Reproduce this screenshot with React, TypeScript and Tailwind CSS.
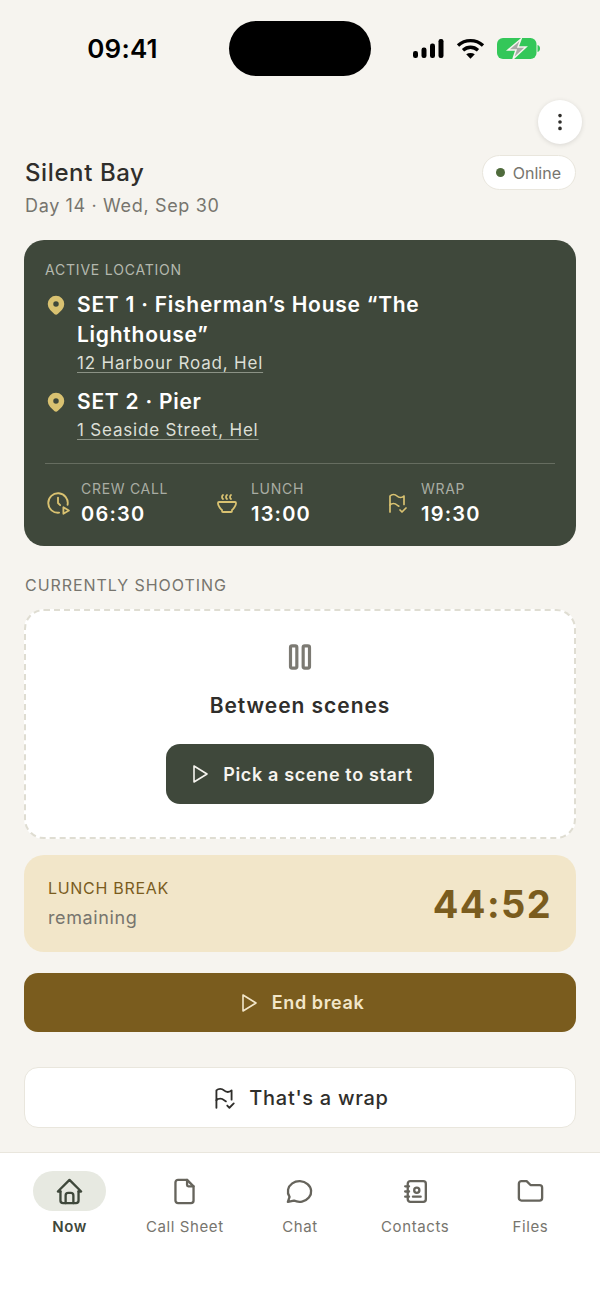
import {
  TbAddressBook,
  TbClockPlay,
  TbDotsVertical,
  TbFile,
  TbFlagCheck,
  TbFolder,
  TbHome,
  TbMapPinFilled,
  TbMessageCircle,
  TbPlayerPause,
  TbPlayerPlay,
  TbSoup,
} from "react-icons/tb";

function StatusIcons() {
  return (
    <div className="flex items-center gap-[12px]">
      <svg width="32" height="21" viewBox="0 0 32 21" fill="#000">
        <rect x="1" y="13" width="5" height="7" rx="2.2" />
        <rect x="9.500" y="9.500" width="5" height="10.500" rx="2.200" />
        <rect x="18" y="5.500" width="5" height="14.500" rx="2.200" />
        <rect x="26.500" y="1" width="5" height="19" rx="2.200" />
      </svg>
      <svg width="29" height="21" viewBox="0 0 29 21" fill="none" stroke="#000" strokeWidth="3.400">
        <path d="M2 7.500C9.200 1 19.800 1 27 7.500" />
        <path d="M7 12.200C11.500 8.300 17.500 8.300 22 12.200" />
        <path d="M14.500 20.800l-4.300-4.600c2.600-1.700 6-1.700 8.600 0z" fill="#000" stroke="none" />
      </svg>
      <svg width="43" height="21" viewBox="0 0 43 21">
        <rect x="0" y="0" width="39.500" height="21" rx="6" fill="#34c759" />
        <path d="M40.500 7c1.700.5 2.500 1.800 2.500 3.500s-.8 3-2.500 3.500z" fill="#34c759" />
        <path d="M24 1 11 12h8l-3 9L29 9h-8z" fill="#a8aaa6" stroke="#f6f4ef" strokeWidth="1.500" />
      </svg>
    </div>
  );
}

function LocationRow({ title, address }: { title: string; address: string }) {
  return (
    <div className="flex gap-[10px]">
      <TbMapPinFilled className="mt-[4px] shrink-0 text-[#d9c271]" size={22} />
      <div className="min-w-0 pr-[100px]">
        <div className="text-[21px] leading-[30px] font-semibold tracking-[0.75px] text-white">{title}</div>
        <div className="mt-[1px] text-[17px] leading-[24px] tracking-[0.8px] text-[#dcdfd6] underline decoration-[#8b9285] decoration-1 underline-offset-[3px]">
          {address}
        </div>
      </div>
    </div>
  );
}

function Stat({ icon, label, value, gap }: { icon: React.ReactNode; label: string; value: string; gap: string }) {
  return (
    <div className={`flex items-center ${gap}`}>
      <span className="text-[#d9c271]">{icon}</span>
      <div>
        <div className="text-[14px] leading-[18px] tracking-[0.7px] text-[#a9ada3]">{label}</div>
        <div className="mt-[4px] text-[20px] leading-[24px] font-semibold tracking-[1.2px] text-white">{value}</div>
      </div>
    </div>
  );
}

function NavItem({ icon, label, active }: { icon: React.ReactNode; label: string; active?: boolean }) {
  return (
    <div className="flex flex-col items-center">
      <div className={`flex h-[40px] w-[73px] items-center justify-center rounded-full ${active ? "bg-[#e7e9e1] text-[#3f483b]" : "text-[#66645c]"}`}>
        {icon}
      </div>
      <div className={`mt-[6px] text-[15px] leading-[20px] tracking-[0.6px] ${active ? "font-semibold text-[#3f483b]" : "text-[#77756e]"}`}>
        {label}
      </div>
    </div>
  );
}

export default function App() {
  return (
    <div className="flex h-[1304px] w-[600px] flex-col overflow-hidden bg-[#f6f4ef] font-['Inter',sans-serif]">
      <div className="flex h-[100px] shrink-0 items-start justify-between pt-[21px]">
        <div className="w-[229px] pt-[12px] pl-[16px] text-center text-[26px] leading-[32px] font-semibold tracking-[0.2px] text-black">
          09:41
        </div>
        <div className="h-[55px] w-[142px] rounded-[28px] bg-black" />
        <div className="flex w-[229px] justify-start pt-[17px] pl-[41px]">
          <StatusIcons />
        </div>
      </div>

      <div className="flex shrink-0 justify-end pr-[18px]">
        <div className="flex h-[44px] w-[44px] items-center justify-center rounded-full bg-white text-[#2f2e2b] shadow-[0_1px_5px_rgba(0,0,0,0.12)]">
          <TbDotsVertical size={22} />
        </div>
      </div>

      <div className="mt-[11px] flex shrink-0 items-start justify-between pr-[24px] pl-[25px]">
        <div className="pt-[2px]">
          <div className="text-[24px] leading-[32px] font-medium tracking-[0.6px] text-[#2f2e2b]">Silent Bay</div>
          <div className="mt-[5px] text-[18px] leading-[24px] tracking-[0.65px] text-[#77756e]">Day 14 · Wed, Sep 30</div>
        </div>
        <div className="flex h-[35px] items-center gap-[8px] rounded-full border border-[#e9e6dd] bg-white pr-[14px] pl-[13px] text-[16px] text-[#77756e]">
          <span className="h-[9px] w-[9px] rounded-full bg-[#4f6b3c]" />
          Online
        </div>
      </div>

      <div className="mx-[24px] mt-[22px] h-[306px] shrink-0 rounded-[20px] bg-[#3f483b] px-[21px] pt-[21px]">
        <div className="text-[14px] leading-[18px] tracking-[0.8px] text-[#b4b8ae]">ACTIVE LOCATION</div>
        <div className="mt-[11px] flex flex-col gap-[12px]">
          <LocationRow title="SET 1 · Fisherman’s House “The Lighthouse”" address="12 Harbour Road, Hel" />
          <LocationRow title="SET 2 · Pier" address="1 Seaside Street, Hel" />
        </div>
        <div className="mt-[21px] border-t border-[#666d60] pt-[16px]">
          <div className="grid grid-cols-3">
            <Stat gap="gap-[10px]" icon={<TbClockPlay size={26} strokeWidth={1.7} />} label="CREW CALL" value="06:30" />
            <Stat gap="gap-[12px]" icon={<TbSoup size={24} strokeWidth={1.8} />} label="LUNCH" value="13:00" />
            <Stat gap="gap-[12px]" icon={<TbFlagCheck size={24} strokeWidth={1.7} />} label="WRAP" value="19:30" />
          </div>
        </div>
      </div>

      <div className="mt-[29px] px-[25px] text-[16px] leading-[20px] tracking-[0.95px] text-[#77756e]">CURRENTLY SHOOTING</div>

      <div className="mx-[24px] mt-[14px] flex h-[230px] shrink-0 flex-col items-center rounded-[20px] border-2 border-dashed border-[#dfddd2] bg-white pt-[27px]">
        <TbPlayerPause className="text-[#7c7a73]" size={38} strokeWidth={2} />
        <div className="mt-[15px] text-[21px] leading-[30px] font-semibold tracking-[0.95px] text-[#2f2e2b]">Between scenes</div>
        <div className="mt-[23px] flex h-[60px] w-[268px] items-center justify-center gap-[12px] rounded-[14px] bg-[#3f483b] text-[18px] font-semibold tracking-[0.65px] text-[#f6f4ef]">
          <TbPlayerPlay size={24} strokeWidth={1.6} />
          Pick a scene to start
        </div>
      </div>

      <div className="mx-[24px] mt-[16px] flex h-[97px] shrink-0 items-center justify-between rounded-[20px] bg-[#f2e6c9] pr-[24px] pl-[24px]">
        <div className="-mt-[1px]">
          <div className="text-[16px] leading-[22px] tracking-[0.7px] text-[#7a5c1e]">LUNCH BREAK</div>
          <div className="mt-[7px] text-[18px] leading-[24px] tracking-[0.6px] text-[#77756e]">remaining</div>
        </div>
        <div className="text-[38px] leading-[44px] font-bold tracking-[1.4px] text-[#7a5c1e]">44:52</div>
      </div>

      <div className="mx-[24px] mt-[21px] flex h-[59px] shrink-0 items-center justify-center gap-[12px] rounded-[14px] bg-[#7a5c1e] text-[18px] font-semibold tracking-[0.6px] text-[#f2e6c9]">
        <TbPlayerPlay size={24} strokeWidth={1.6} />
        End break
      </div>

      <div className="mx-[24px] mt-[35px] flex h-[61px] shrink-0 items-center justify-center gap-[12px] rounded-[14px] border border-[#e9e6dd] bg-white text-[20px] font-medium tracking-[0.7px] text-[#2f2e2b]">
        <TbFlagCheck size={26} strokeWidth={1.7} />
        That's a wrap
      </div>

      <div className="mt-[24px] grid flex-1 grid-cols-5 border-t border-[#e9e6dd] bg-white px-[12px] pt-[18px]">
        <NavItem icon={<TbHome size={31} strokeWidth={1.8} />} label="Now" active />
        <NavItem icon={<TbFile size={31} strokeWidth={1.8} />} label="Call Sheet" />
        <NavItem icon={<TbMessageCircle size={31} strokeWidth={1.8} />} label="Chat" />
        <NavItem icon={<TbAddressBook size={31} strokeWidth={1.8} />} label="Contacts" />
        <NavItem icon={<TbFolder size={31} strokeWidth={1.8} />} label="Files" />
      </div>
    </div>
  );
}
